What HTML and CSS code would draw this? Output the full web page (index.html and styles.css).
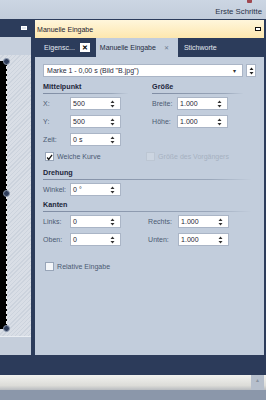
FILE: index.html
```html
<!DOCTYPE html>
<html lang="de">
<head>
  <meta charset="UTF-8" />
  <meta name="viewport" content="width=device-width, initial-scale=1.0" />
  <title>Manuelle Eingabe</title>
  <link rel="stylesheet" href="styles.css">
</head>
<body>
  <div class="ribbon">
    <span class="ribbon-icon"></span>
    <span class="ribbon-link">Erste Schritte</span>
  </div>

  <div class="main">
    <div class="left-panel">
      <div class="panel-head"><span class="mini-btn light"></span></div>
      <div class="left-strip"></div>
      <div class="canvas">
        <div class="canvas-frame">
          <span class="handle"></span>
          <span class="handle"></span>
          <span class="handle"></span>
        </div>
      </div>
      <div class="left-foot"></div>
    </div>

    <div class="splitter"></div>

    <div class="dock">
      <div class="dock-title">
        <span>Manuelle Eingabe</span>
        <span class="mini-btn"></span>
      </div>
      <div class="tabs">
        <div class="tab">Eigensc... <span class="tab-close">&#x2715;</span></div>
        <div class="tab active">Manuelle Eingabe <span class="tab-x">&#x2715;</span></div>
        <div class="tab">Stichworte</div>
      </div>

      <div class="content">
        <div class="select-row">
          <div class="select">
            <span>Marke 1 - 0,00 s (Bild "B.jpg")</span>
            <span class="caret">&#x25BE;</span>
          </div>
          <div class="spin-btn">
            <svg width="5" height="8" viewBox="0 0 5 8"><path d="M2.5 0.5 L4.5 3 H0.5 Z M0.5 5 H4.5 L2.5 7.5 Z" fill="#222"/></svg>
          </div>
        </div>

        <div class="two-col">
          <div class="col col-left">
            <div class="heading">Mittelpunkt</div>
            <div class="field"><label>X:</label><div class="spin">500<svg width="5" height="8" viewBox="0 0 5 8"><path d="M2.5 0.5 L4.5 3 H0.5 Z M0.5 5 H4.5 L2.5 7.5 Z" fill="#333"/></svg></div></div>
            <div class="field"><label>Y:</label><div class="spin">500<svg width="5" height="8" viewBox="0 0 5 8"><path d="M2.5 0.5 L4.5 3 H0.5 Z M0.5 5 H4.5 L2.5 7.5 Z" fill="#333"/></svg></div></div>
            <div class="field"><label>Zeit:</label><div class="spin">0 s<svg width="5" height="8" viewBox="0 0 5 8"><path d="M2.5 0.5 L4.5 3 H0.5 Z M0.5 5 H4.5 L2.5 7.5 Z" fill="#333"/></svg></div></div>
          </div>
          <div class="col col-right">
            <div class="heading">Größe</div>
            <div class="field"><label>Breite:</label><div class="spin">1.000<svg width="5" height="8" viewBox="0 0 5 8"><path d="M2.5 0.5 L4.5 3 H0.5 Z M0.5 5 H4.5 L2.5 7.5 Z" fill="#333"/></svg></div></div>
            <div class="field"><label>Höhe:</label><div class="spin">1.000<svg width="5" height="8" viewBox="0 0 5 8"><path d="M2.5 0.5 L4.5 3 H0.5 Z M0.5 5 H4.5 L2.5 7.5 Z" fill="#333"/></svg></div></div>
          </div>
        </div>

        <div class="check-row">
          <div class="check"><span class="box checked"><svg width="9" height="9" viewBox="0 0 9 9"><path d="M1.5 4.5 L3.5 7 L7.8 1.2" fill="none" stroke="#111" stroke-width="1.6"/></svg></span>Weiche Kurve</div>
          <div class="check disabled"><span class="box"></span>Größe des Vorgängers</div>
        </div>

        <div class="heading wide">Drehung</div>
        <div class="field"><label>Winkel:</label><div class="spin">0 °<svg width="5" height="8" viewBox="0 0 5 8"><path d="M2.5 0.5 L4.5 3 H0.5 Z M0.5 5 H4.5 L2.5 7.5 Z" fill="#333"/></svg></div></div>

        <div class="heading wide kanten">Kanten</div>
        <div class="two-col tight">
          <div class="col col-left">
            <div class="field"><label>Links:</label><div class="spin">0<svg width="5" height="8" viewBox="0 0 5 8"><path d="M2.5 0.5 L4.5 3 H0.5 Z M0.5 5 H4.5 L2.5 7.5 Z" fill="#333"/></svg></div></div>
            <div class="field"><label>Oben:</label><div class="spin">0<svg width="5" height="8" viewBox="0 0 5 8"><path d="M2.5 0.5 L4.5 3 H0.5 Z M0.5 5 H4.5 L2.5 7.5 Z" fill="#333"/></svg></div></div>
          </div>
          <div class="col col-edge">
            <div class="field"><label>Rechts:</label><div class="spin">1.000<svg width="5" height="8" viewBox="0 0 5 8"><path d="M2.5 0.5 L4.5 3 H0.5 Z M0.5 5 H4.5 L2.5 7.5 Z" fill="#333"/></svg></div></div>
            <div class="field"><label>Unten:</label><div class="spin">1.000<svg width="5" height="8" viewBox="0 0 5 8"><path d="M2.5 0.5 L4.5 3 H0.5 Z M0.5 5 H4.5 L2.5 7.5 Z" fill="#333"/></svg></div></div>
          </div>
        </div>

        <div class="check-row last">
          <div class="check"><span class="box"></span>Relative Eingabe</div>
        </div>
      </div>
    </div>
    <div class="edge"></div>
  </div>

  <div class="band"></div>
  <div class="scrollbar"><span class="scroll-arrow">&#x25B2;</span></div>
  <div class="status"></div>
</body>
</html>
```

FILE: styles.css
```css
* {
  box-sizing: border-box;
}
body {
  margin: 0;
  width: 266px;
  height: 400px;
  overflow: hidden;
  background: #c7d1de;
  font-family: 'Liberation Sans', Arial, sans-serif;
  font-size: 7px;
  color: #1f2b40;
}

/* top ribbon */
.ribbon {
  height: 19px;
  position: relative;
  background: linear-gradient(#ccd6e3, #c2ccda);
  display: flex;
  justify-content: flex-end;
  align-items: center;
  padding: 3px 4px 0 0;
}
.ribbon-link {
  font-size: 7.8px;
  color: #2a3348;
}
.ribbon-icon {
  position: absolute;
  right: 14px;
  top: 0;
  width: 5px;
  height: 3px;
  background: #a0474f;
  border-radius: 0 0 1px 1px;
}

/* main area */
.main {
  display: flex;
  height: 336px;
}
.left-panel {
  width: 33px;
  display: flex;
  flex-direction: column;
}
.panel-head {
  height: 18px;
  background: #2c3c5b;
  display: flex;
  align-items: center;
  justify-content: flex-end;
  padding-right: 4px;
}
.mini-btn {
  width: 6px;
  height: 4px;
  border: 1px solid #111;
  background: #fff;
}
.mini-btn.light {
  border-color: #fff;
  background: #dfe6ef;
}
.left-strip {
  height: 18px;
  background: #c7d0dd;
}
.canvas {
  flex: 1;
  padding-top: 6px;
  padding-bottom: 7px;
  background: repeating-linear-gradient(135deg, #d9dee6 0 2px, #ccd3dd 2px 3px);
  border-bottom: 1px solid #e9edf2;
}
.canvas-frame {
  position: relative;
  width: 7px;
  height: 100%;
  background: #000;
  border-right: 1px dashed #e8e8e8;
  display: flex;
  flex-direction: column;
  justify-content: space-between;
  align-items: flex-end;
}
.handle {
  width: 7px;
  height: 7px;
  margin: -3px -4px 0 0;
  border-radius: 50%;
  background: #2f3d5a;
  border: 1px solid #8d9ab0;
}
.handle:last-child {
  margin: 0 -4px -3px 0;
}
.left-foot {
  height: 18px;
  background: #c5cedb;
}
.splitter {
  width: 4px;
  background: #2c3c5b;
}
.edge {
  width: 2px;
  background: #2c3c5b;
}

/* docked window */
.dock {
  flex: 1;
  display: flex;
  flex-direction: column;
  background: #c2cddc;
}
.dock-title {
  height: 19px;
  border-top: 1px solid #2c3c5b;
  background: linear-gradient(#fff6dc, #fde7ae);
  display: flex;
  align-items: center;
  justify-content: space-between;
  padding: 0 3px 0 2px;
  color: #1c2232;
}
.tabs {
  height: 19px;
  background: #2c3c5b;
  display: flex;
  align-items: stretch;
  padding-left: 2px;
}
.tab {
  display: flex;
  align-items: center;
  gap: 5px;
  padding: 0 6px 0 6px;
  color: #e4e9f1;
}
.tab:first-child {
  padding-left: 7px;
}
.tab.active {
  background: #c2cddc;
  color: #1f2b40;
  padding: 0 9px 0 4px;
}
.tab-close {
  width: 10px;
  height: 9px;
  background: #fff;
  color: #000;
  font-weight: bold;
  font-size: 7px;
  line-height: 9px;
  text-align: center;
}
.tab-x {
  color: #6c7a90;
  font-size: 6px;
  margin-left: 3px;
}

.content {
  flex: 1;
  padding: 7px 8px 0 8px;
  display: flex;
  flex-direction: column;
}
.select-row {
  display: flex;
  gap: 3px;
  height: 13px;
}
.select {
  width: 200px;
  background: #fff;
  border: 1px solid #aab5c6;
  display: flex;
  align-items: center;
  justify-content: space-between;
  padding: 0 6px 0 3px;
}
.caret {
  font-size: 6px;
  color: #333;
}
.spin-btn {
  width: 10px;
  background: #fff;
  border: 1px solid #aab5c6;
  display: flex;
  align-items: center;
  justify-content: center;
}

.two-col {
  display: flex;
  gap: 24px;
  margin-top: 5px;
}
.two-col.tight {
  gap: 20px;
  margin-top: 0;
}
.col {
  display: flex;
  flex-direction: column;
}
.col-left {
  width: 85px;
}
.col-right {
  width: 91px;
}
.col-edge {
  width: 85px;
}
.heading {
  font-weight: bold;
  font-size: 7.2px;
  color: #1c263a;
  height: 12px;
  line-height: 10px;
  border-bottom: 1px solid transparent;
  border-image: linear-gradient(90deg, #7f8ca3, #9aa7ba 80%, rgba(154, 167, 186, 0)) 1;
  margin-bottom: 3px;
}
.heading.wide {
  width: 208px;
  margin-top: 6px;
}
.heading.wide.kanten {
  margin-top: -1px;
}
.field {
  display: flex;
  align-items: center;
  height: 13px;
  margin-bottom: 5px;
}
.field label {
  width: 27px;
  color: #4b5a72;
}
.col-right .field label {
  width: 25px;
}
.col-edge .field label {
  width: 30px;
}
.spin {
  width: 51px;
  height: 13px;
  background: #fff;
  border: 1px solid #aab5c6;
  display: flex;
  align-items: center;
  justify-content: space-between;
  padding: 0 5px 0 2px;
  color: #1f2633;
}

.check-row {
  display: flex;
  height: 12px;
  align-items: center;
  margin-top: -1px;
}
.check-row.last {
  margin-top: 9px;
}
.check {
  display: flex;
  align-items: center;
  gap: 3px;
  padding-left: 2px;
  color: #4b5a72;
  width: 101px;
}
.check.disabled {
  color: #a6b1c1;
}
.box {
  width: 9px;
  height: 9px;
  background: #f4f6f9;
  border: 1px solid #98a5b8;
  display: flex;
}
.box.checked {
  background: #fff;
}
.check.disabled .box {
  background: #ccd5e1;
  border-color: #bcc6d3;
}

/* bottom bars */
.band {
  height: 20px;
  background: #2c3b5a;
}
.scrollbar {
  height: 15px;
  background: linear-gradient(#f2f2ef, #dcdcd8 70%, #b9bcc0);
  display: flex;
  justify-content: flex-end;
}
.scroll-arrow {
  width: 13px;
  margin-right: 2px;
  background: #b6bfcc;
  color: #8a93a0;
  font-size: 5px;
  text-align: center;
  line-height: 10px;
}
.status {
  height: 10px;
  background: #8b97aa;
}
```
